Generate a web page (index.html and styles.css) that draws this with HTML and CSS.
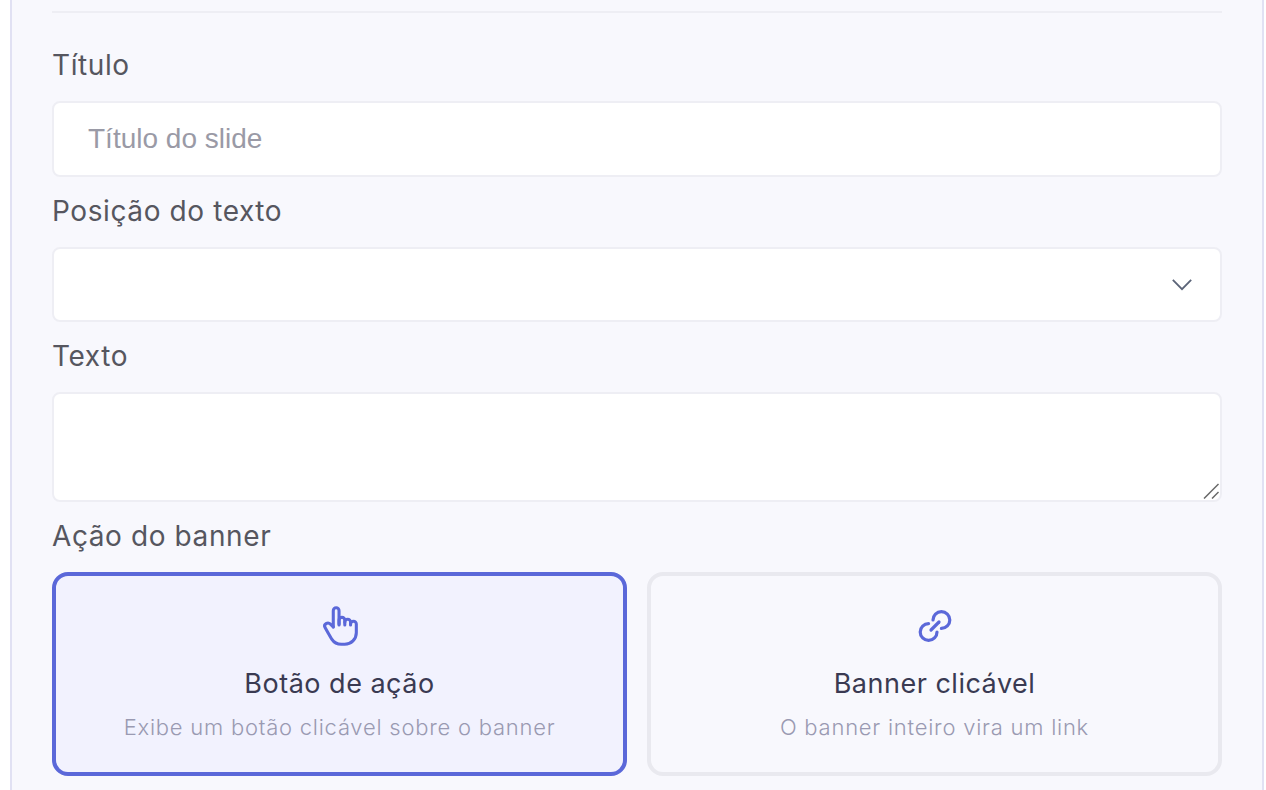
FILE: index.html
```html
<!DOCTYPE html>
<html lang="pt-BR">
<head>
  <meta charset="UTF-8" />
  <meta name="viewport" content="width=device-width, initial-scale=1.0"/>
  <title>Editar slide</title>
  <link rel="stylesheet" href="styles.css">
</head>
<body>
  <div class="panel">
    <div class="divider"></div>
    <form class="slide-form">
      <label class="field-label field-label-first" for="titulo">Título</label>
      <input class="field-input" type="text" id="titulo" placeholder="Título do slide">

      <label class="field-label" for="posicao">Posição do texto</label>
      <div class="select-wrap">
        <select class="field-input field-select" id="posicao"></select>
        <svg class="select-arrow" viewBox="0 0 24 14" fill="none" stroke="#5b6478" stroke-width="2">
          <path d="M2 2l10 10l10 -10"/>
        </svg>
      </div>

      <label class="field-label" for="texto">Texto</label>
      <div class="textarea-wrap">
        <textarea class="field-input field-textarea" id="texto"></textarea>
        <svg class="textarea-grip" viewBox="0 0 16 16" fill="none" stroke="#666666" stroke-width="1.5">
          <path d="M1 15.5L15.5 1"/>
          <path d="M9 15.5L15.5 9"/>
        </svg>
      </div>

      <label class="field-label">Ação do banner</label>
      <div class="action-grid">
        <div class="action-card active">
          <svg class="action-icon" viewBox="-1 0 25 25" fill="none" stroke="currentColor" stroke-width="1.6" stroke-linecap="round" stroke-linejoin="round">
            <path d="M8 13v-8.5a1.5 1.5 0 0 1 3 0v7.5"/>
            <path d="M11 11.5v-2a1.5 1.5 0 1 1 3 0v2.5"/>
            <path d="M14 10.5a1.5 1.5 0 0 1 3 0v1.5"/>
            <path d="M17 11.5a1.5 1.5 0 0 1 3 0v4.5a6 6 0 0 1 -6 6h-2h.208a6 6 0 0 1 -5.012 -2.7a69.74 69.74 0 0 1 -.196 -.3c-.312 -.479 -1.407 -2.388 -3.286 -5.728a1.5 1.5 0 0 1 .536 -2.022a1.867 1.867 0 0 1 2.28 .28l1.47 1.47"/>
          </svg>
          <div class="action-title">Botão de ação</div>
          <div class="action-desc">Exibe um botão clicável sobre o banner</div>
        </div>
        <div class="action-card">
          <svg class="action-icon" viewBox="0 0 24 24" fill="none" stroke="currentColor" stroke-width="1.6" stroke-linecap="round" stroke-linejoin="round">
            <path d="M10 14l4 -4"/>
            <path d="M11 9a4.2 4.2 0 1 1 4.2 4.2"/>
            <path d="M13 15a4.2 4.2 0 1 1 -4.2 -4.2"/>
          </svg>
          <div class="action-title">Banner clicável</div>
          <div class="action-desc">O banner inteiro vira um link</div>
        </div>
      </div>
    </form>
  </div>
</body>
</html>
```

FILE: styles.css
```css
* {
    margin: 0;
    padding: 0;
    box-sizing: border-box;
}
html, body {
    height: 790px;
    overflow: hidden;
}
body {
    font-family: 'Inter', 'Noto Sans', sans-serif;
    background: #ffffff;
    padding-left: 10px;
    padding-right: 2px;
}
.panel {
    height: 790px;
    background: #f8f8fd;
    border-left: 2px solid #e1e1f3;
    border-right: 2px solid #e1e1f3;
    padding: 11px 40px 0 40px;
}
.divider {
    height: 2px;
    background: #eeeef4;
}
.field-label {
    display: flex;
    align-items: center;
    height: 70px;
    font-size: 28px;
    letter-spacing: 0.6px;
    color: #56565f;
    padding-bottom: 2px;
}
.field-label-first {
    height: 88px;
    padding-top: 18px;
}
.field-input {
    display: block;
    width: 100%;
    height: 76px;
    background: #ffffff;
    border: 2px solid #eeeef4;
    border-radius: 8px;
    padding: 0 34px;
    font-family: 'Liberation Sans', Arial, sans-serif;
    font-size: 28px;
    color: #333333;
    outline: none;
}
.field-input::placeholder {
    color: #9a9aa6;
}
.select-wrap,
.textarea-wrap {
    position: relative;
}
.field-select {
    height: 75px;
    appearance: none;
}
.select-arrow {
    position: absolute;
    top: 31px;
    right: 29px;
    width: 22px;
    height: 13px;
}
.field-textarea {
    height: 110px;
    resize: none;
    padding: 16px 34px;
}
.textarea-grip {
    position: absolute;
    right: 3px;
    bottom: 3px;
    width: 16px;
    height: 16px;
    pointer-events: none;
}
.action-grid {
    display: grid;
    grid-template-columns: 1fr 1fr;
    gap: 20px;
}
.action-card {
    height: 204px;
    border: 4px solid #e9e9ef;
    border-radius: 16px;
    text-align: center;
    padding-top: 26px;
}
.action-card.active {
    border-color: #5b68d9;
    background: #f2f2fe;
}
.action-icon {
    display: block;
    width: 48px;
    height: 48px;
    margin: 0 auto;
    color: #5b68d9;
}
.action-title {
    margin-top: 16px;
    font-size: 27px;
    letter-spacing: 0.5px;
    line-height: 36px;
    color: #3a3a52;
}
.action-desc {
    margin-top: 10px;
    font-size: 22px;
    letter-spacing: 0.76px;
    line-height: 30px;
    font-weight: 300;
    color: #9a9ab2;
}
```
